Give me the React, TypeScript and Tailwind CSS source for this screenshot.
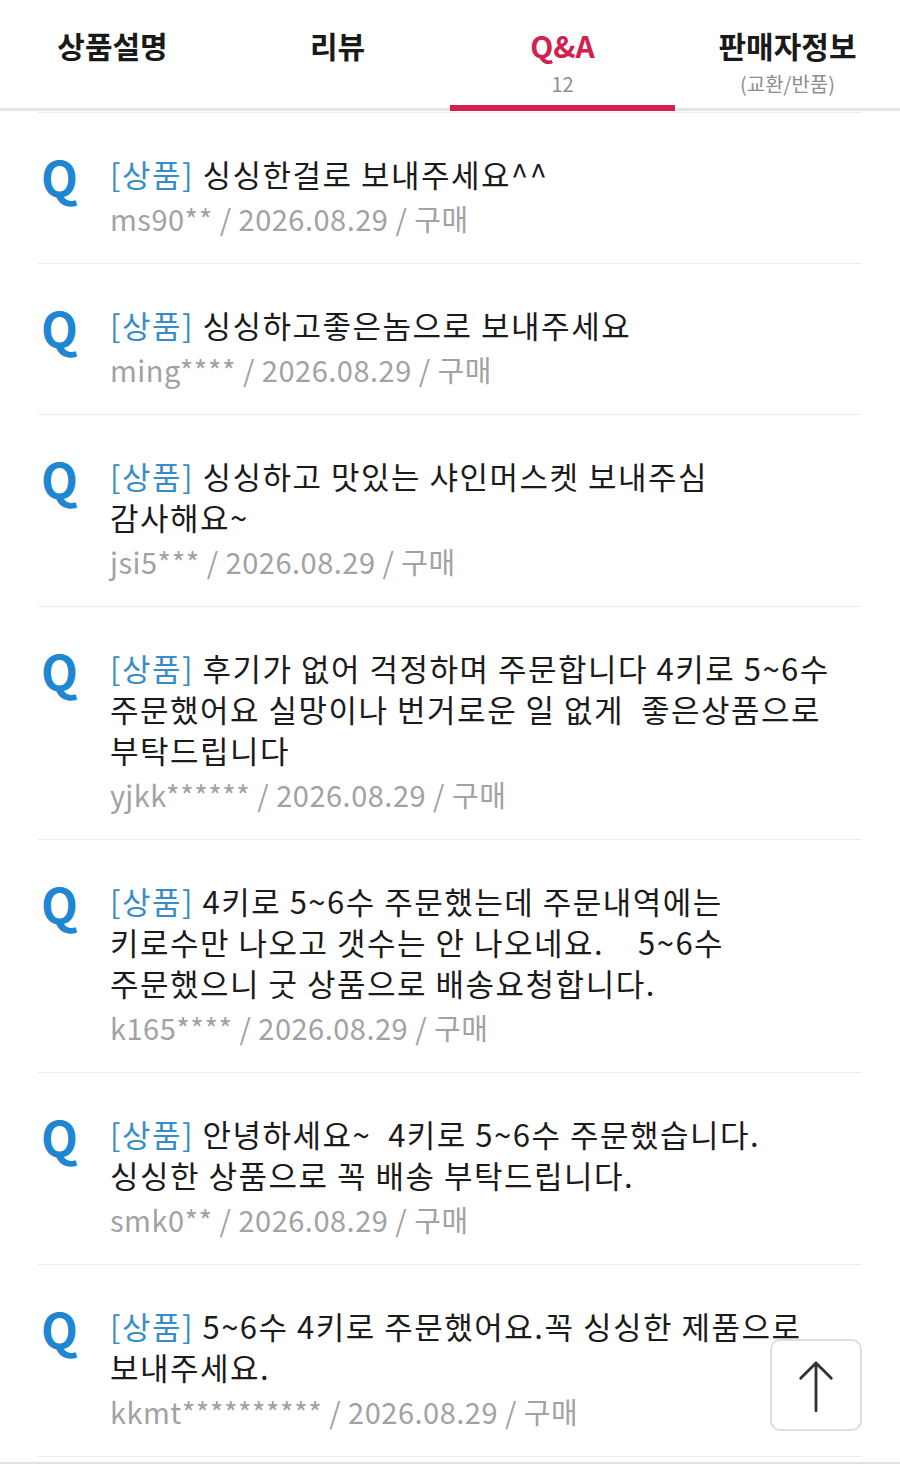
import React from "react";

const FONT = { fontFamily: '"Noto Sans CJK KR", "Noto Sans", sans-serif' };

type Question = {
  lines: string[];
  user: string;
};

const questions: Question[] = [
  { lines: ["싱싱한걸로 보내주세요^^"], user: "ms90**" },
  { lines: ["싱싱하고좋은놈으로 보내주세요"], user: "ming****" },
  { lines: ["싱싱하고 맛있는 샤인머스켓 보내주심", "감사해요~"], user: "jsi5***" },
  {
    lines: [
      "후기가 없어 걱정하며 주문합니다 4키로 5~6수",
      "주문했어요 실망이나 번거로운 일 없게  좋은상품으로",
      "부탁드립니다",
    ],
    user: "yjkk******",
  },
  {
    lines: [
      "4키로 5~6수 주문했는데 주문내역에는",
      "키로수만 나오고 갯수는 안 나오네요.    5~6수",
      "주문했으니 굿 상품으로 배송요청합니다.",
    ],
    user: "k165****",
  },
  {
    lines: ["안녕하세요~  4키로 5~6수 주문했습니다.", "싱싱한 상품으로 꼭 배송 부탁드립니다."],
    user: "smk0**",
  },
  { lines: ["5~6수 4키로 주문했어요.꼭 싱싱한 제품으로", "보내주세요."], user: "kkmt**********" },
];

const tabs = [
  { label: "상품설명" },
  { label: "리뷰" },
  { label: "Q&A", sub: "12", active: true },
  { label: "판매자정보", sub: "(교환/반품)" },
];

function QuestionRow({ q }: { q: Question }) {
  return (
    <div className="mx-[38px] flex border-b border-[#ececec] pt-[40px] pb-[24px]">
      {/* Q mark */}
      <div className="w-[72px] shrink-0 pl-[3px]">
        <span className="mt-[3px] block text-[48px] font-bold leading-[41px] text-[#1f86d4]">Q</span>
      </div>
      <div className="min-w-0 flex-1">
        {q.lines.map((line, i) => (
          <div
            key={i}
            className="h-[41px] whitespace-pre text-[31px] leading-[41px] tracking-[1.5px] text-[#1b1b1b]"
          >
            {i === 0 && <span className="text-[#3a8cc6]">[상품] </span>}
            {line}
          </div>
        ))}
        <div className="mt-[4px] h-[41px] text-[29px] leading-[41px] tracking-[0.5px] text-[#a2a2a2]">
          {q.user} / 2026.08.29 / 구매
        </div>
      </div>
    </div>
  );
}

export default function App() {
  return (
    <div className="relative min-h-[1464px] w-[900px] bg-white" style={FONT}>
      {/* Tabs */}
      <div className="grid h-[111px] grid-cols-4 border-b-[3px] border-[#e4e4e4]">
        {tabs.map((t) => (
          <div key={t.label} className="relative flex flex-col items-center pt-[25px]">
            <span
              className={`text-[30px] font-bold leading-[40px] ${
                t.active ? "text-[#d2214f]" : "text-[#1a1a1a]"
              }`}
            >
              {t.label}
            </span>
            {t.sub && (
              <span className="mt-[5px] text-[20px] leading-[28px] text-[#8e8e8e]">{t.sub}</span>
            )}
            {t.active && (
              <span className="absolute bottom-[-3px] left-0 right-0 h-[6px] bg-[#d2214f]" />
            )}
          </div>
        ))}
      </div>

      {/* Q&A list */}
      <div className="mx-[38px] mt-[1px] border-t border-[#ececec]" />
      {questions.map((q, i) => (
        <QuestionRow key={i} q={q} />
      ))}
      <div className="mt-[5px] h-[3px] bg-[#e2e2e2]" />

      {/* Scroll to top */}
      <button className="absolute left-[770px] top-[1339px] flex h-[92px] w-[92px] items-center justify-center rounded-[10px] border-2 border-[#dedede] bg-white">
        <svg width="92" height="92" viewBox="0 0 92 92" fill="none">
          <path d="M46 23 V73 M30 39 L46 23 L62 39" stroke="#333" strokeWidth="3" strokeLinecap="round" strokeLinejoin="round" />
        </svg>
      </button>
    </div>
  );
}
